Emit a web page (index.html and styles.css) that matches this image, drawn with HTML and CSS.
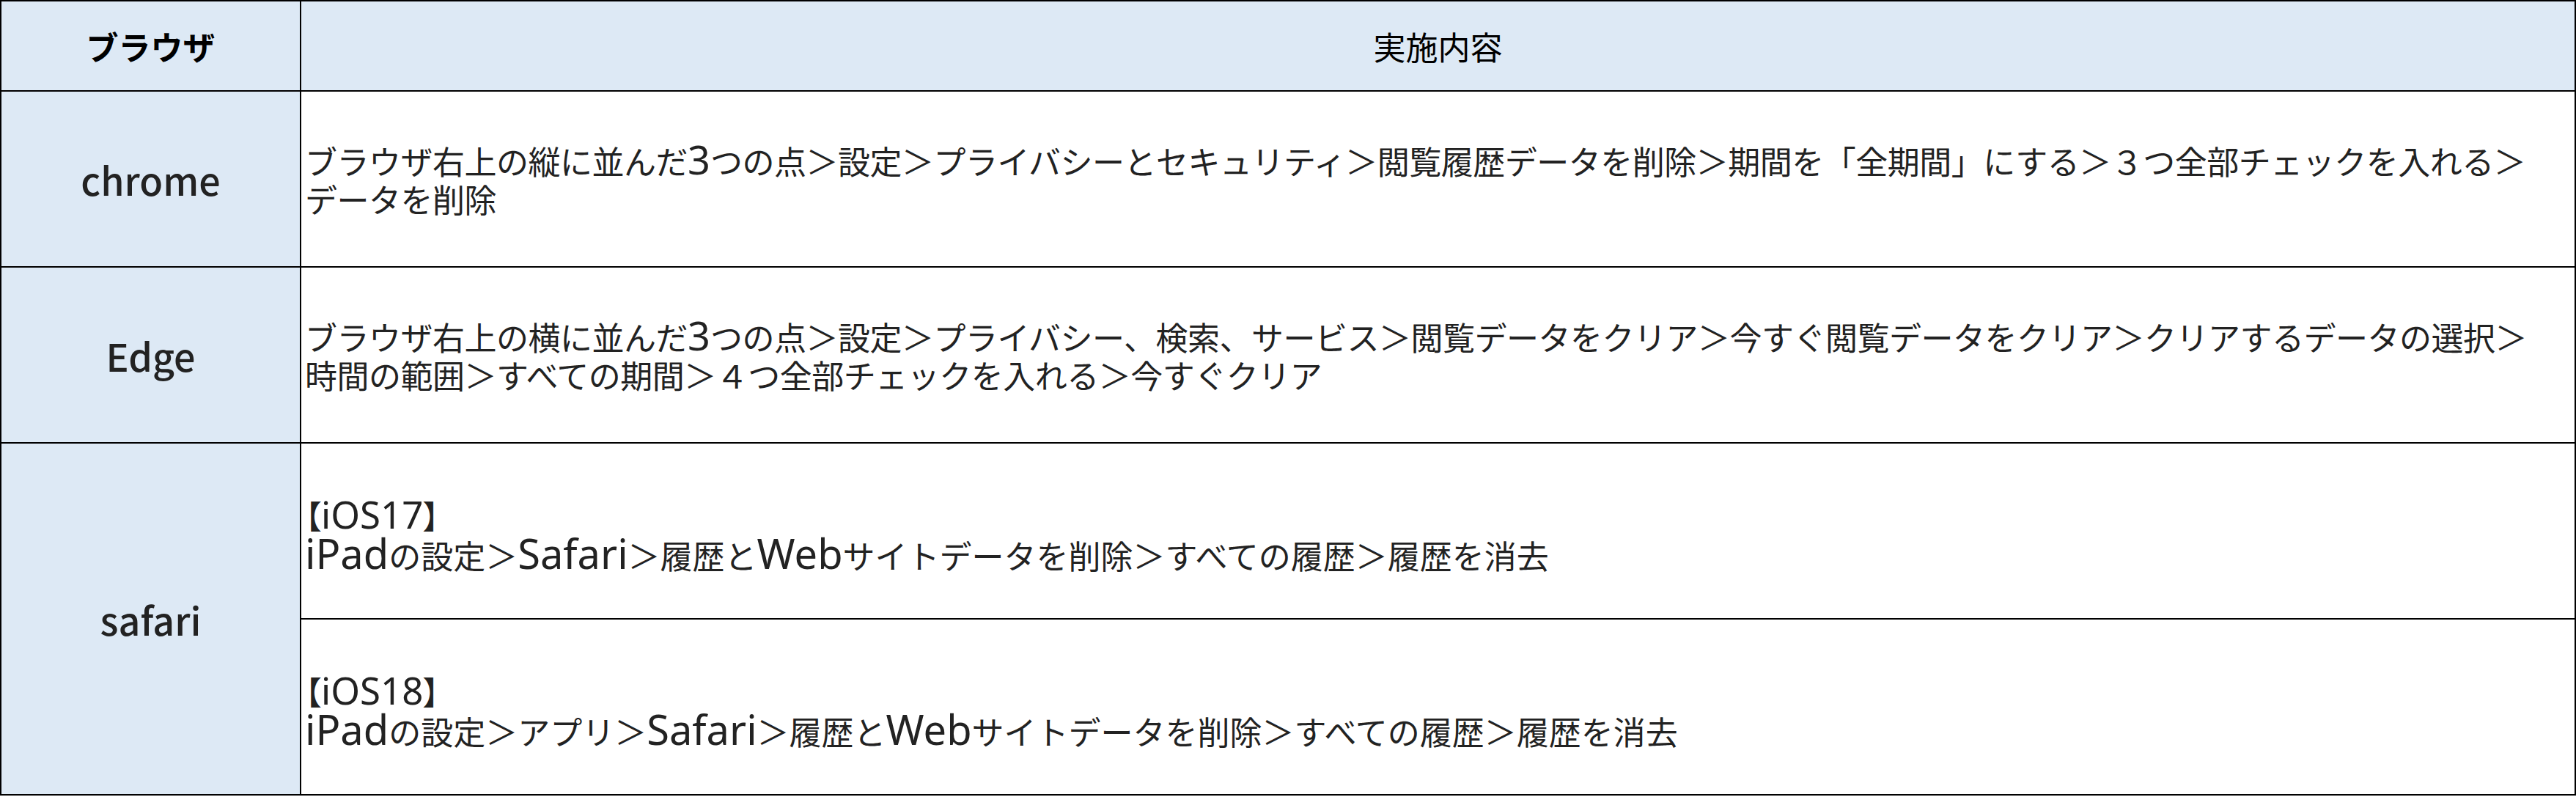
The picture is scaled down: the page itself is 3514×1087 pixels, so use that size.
FILE: index.html
```html
<!DOCTYPE html>
<html lang="ja">
<head>
<meta charset="utf-8">
<title>ブラウザ 履歴削除手順</title>
<link rel="stylesheet" href="styles.css">
</head>
<body>
<div class="sheet">
  <div class="cell head head-name">ブラウザ</div>
  <div class="cell head head-body">実施内容</div>

  <div class="cell name">chrome</div>
  <div class="cell body"><p>ブラウザ右上の縦に並んだ<span class="lat">3</span>つの点＞設定＞プライバシーとセキュリティ＞閲覧履歴データを削除＞期間を「全期間」にする＞３つ全部チェックを入れる＞<br>データを削除</p></div>

  <div class="cell name">Edge</div>
  <div class="cell body"><p>ブラウザ右上の横に並んだ<span class="lat">3</span>つの点＞設定＞プライバシー、検索、サービス＞閲覧データをクリア＞今すぐ閲覧データをクリア＞クリアするデータの選択＞<br>時間の範囲＞すべての期間＞４つ全部チェックを入れる＞今すぐクリア</p></div>

  <div class="cell name span2">safari</div>
  <div class="cell body ios"><p><span class="tag">【<span class="lat">iOS17</span>】</span><br><span class="lat">iPad</span>の設定＞<span class="lat">Safari</span>＞履歴と<span class="lat">Web</span>サイトデータを削除＞すべての履歴＞履歴を消去</p></div>
  <div class="cell body ios"><p><span class="tag">【<span class="lat">iOS18</span>】</span><br><span class="lat">iPad</span>の設定＞アプリ＞<span class="lat">Safari</span>＞履歴と<span class="lat">Web</span>サイトデータを削除＞すべての履歴＞履歴を消去</p></div>
</div>
</body>
</html>
```

FILE: styles.css
```css
html, body {
  margin: 0;
  padding: 0;
  background: #ffffff;
}

.sheet {
  display: grid;
  grid-template-columns: 409px 1fr;
  grid-template-rows: 123px 240px 240px 240px 240px;
  width: 3514px;
  box-sizing: border-box;
  border-top: 2px solid #000;
  border-left: 2px solid #000;
  font-family: "Noto Sans CJK JP", "Noto Sans", sans-serif;
  color: #222;
}

.cell {
  box-sizing: border-box;
  border-right: 2px solid #000;
  border-bottom: 2px solid #000;
  display: flex;
  align-items: center;
  min-width: 0;
}

.head {
  background: #dde9f5;
  justify-content: center;
  font-size: 44px;
  color: #000;
}

.head-name {
  font-weight: 700;
}

.head-body {
  font-weight: 400;
}

.name {
  background: #dde9f5;
  justify-content: center;
  font-size: 52px;
  font-weight: 500;
  color: #222;
}

.span2 {
  grid-row: span 2;
}

.body {
  padding: 0 6px 0 5px;
  font-size: 44px;
  line-height: 52px;
  letter-spacing: -0.5px;
  color: #222;
  white-space: nowrap;
}

.body p {
  margin: 0;
}

.ios {
  padding-top: 10px;
  letter-spacing: 0;
}

.lat {
  font-family: "Noto Sans", "Noto Sans CJK JP", sans-serif;
  font-size: 54px;
  line-height: 52px;
  letter-spacing: 0;
}

.ios .lat {
  font-size: 56px;
}

.tag {
  font-feature-settings: "palt";
}

.ios .tag .lat {
  font-size: 51px;
}
```
